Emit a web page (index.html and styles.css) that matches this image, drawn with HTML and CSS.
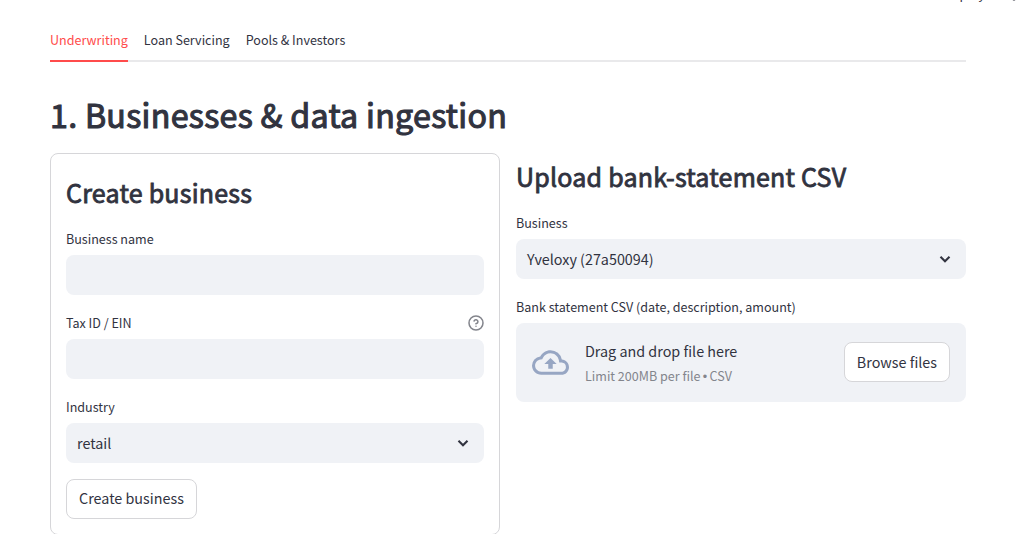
FILE: index.html
```html
<!DOCTYPE html>
<html lang="en">
  <head>
    <meta charset="UTF-8" />
    <meta name="viewport" content="width=device-width, initial-scale=1.0" />
    <title>Underwriting</title>
    <link rel="stylesheet" href="styles.css">
  </head>
  <body>
    <header class="toolbar">
      <span class="deploy">Deploy</span>
      <svg class="menu-dots" viewBox="0 0 4 16" fill="currentColor">
        <circle cx="2" cy="2" r="1.6" />
        <circle cx="2" cy="8" r="1.6" />
        <circle cx="2" cy="14" r="1.6" />
      </svg>
    </header>

    <main class="container">
      <nav class="tabs">
        <a class="tab active">Underwriting</a>
        <a class="tab">Loan Servicing</a>
        <a class="tab">Pools &amp; Investors</a>
      </nav>

      <h1>1. Businesses &amp; data ingestion</h1>

      <div class="columns">
        <form class="card">
          <h2>Create business</h2>

          <div class="field">
            <label for="name">Business name</label>
            <input id="name" class="control" type="text" />
          </div>

          <div class="field">
            <div class="label-row">
              <label for="tax">Tax ID / EIN</label>
              <svg class="help" viewBox="0 0 24 24" fill="none" stroke="currentColor" stroke-width="2.3" stroke-linecap="round" stroke-linejoin="round">
                <circle cx="12" cy="12" r="10.5" />
                <path d="M9.09 9a3 3 0 0 1 5.83 1c0 2-3 3-3 3" />
                <path d="M12 17h.01" />
              </svg>
            </div>
            <input id="tax" class="control" type="text" />
          </div>

          <div class="field">
            <label>Industry</label>
            <div class="control select">
              <span>retail</span>
              <svg class="chevron" viewBox="0 0 24 24" fill="none" stroke="currentColor" stroke-width="2.5">
                <path d="M6.6 9.2 12 14.6l5.4-5.4" />
              </svg>
            </div>
          </div>

          <button type="button" class="btn">Create business</button>
        </form>

        <section class="upload">
          <h2>Upload bank-statement CSV</h2>

          <div class="field">
            <label>Business</label>
            <div class="control select">
              <span>Yveloxy (27a50094)</span>
              <svg class="chevron" viewBox="0 0 24 24" fill="none" stroke="currentColor" stroke-width="2.5">
                <path d="M6.6 9.2 12 14.6l5.4-5.4" />
              </svg>
            </div>
          </div>

          <div class="field">
            <label>Bank statement CSV (date, description, amount)</label>
            <div class="dropzone">
              <svg class="cloud" viewBox="0 0 24 24" fill="currentColor">
                <path d="M19.35 10.04A7.49 7.49 0 0 0 12 4C9.11 4 6.6 5.64 5.35 8.04A5.994 5.994 0 0 0 0 14c0 3.31 2.69 6 6 6h13c2.76 0 5-2.24 5-5 0-2.64-2.05-4.78-4.65-4.96zM19 18H6c-2.21 0-4-1.79-4-4 0-2.05 1.53-3.76 3.56-3.97l1.07-.11.5-.95A5.469 5.469 0 0 1 12 6c2.62 0 4.88 1.86 5.39 4.43l.3 1.5 1.53.11A2.98 2.98 0 0 1 22 15c0 1.65-1.35 3-3 3zM8 13h2.55v3h2.9v-3H16l-4-4z" />
              </svg>
              <div class="drop-text">
                <span class="drop-title">Drag and drop file here</span>
                <small>Limit 200MB per file <span class="dot">•</span> CSV</small>
              </div>
              <button type="button" class="btn browse">Browse files</button>
            </div>
          </div>
        </section>
      </div>
    </main>
  </body>
</html>
```

FILE: styles.css
```css
:root {
  --primary-color: #ff4b4b;
  --text-color: #31333f;
  --muted-color: #83858c;
  --field-color: #f0f2f6;
  --border-color: #d6d6d9;
  --radius: 8px;
}

* {
  box-sizing: border-box;
}

body {
  margin: 0;
  height: 534px;
  overflow: hidden;
  position: relative;
  background-color: white;
  color: var(--text-color);
  font-family: "Noto Sans CJK SC", "Noto Sans", sans-serif;
  font-size: 14.35px;
  line-height: 24px;
}

/* scrolled almost out of view */
.toolbar {
  position: absolute;
  top: -18px;
  right: 17px;
  display: flex;
  align-items: center;
  gap: 27px;
}

.deploy {
  font-size: 12.6px;
}

.menu-dots {
  width: 4px;
  height: 16px;
  margin-top: -2px;
}

.container {
  width: 916px;
  margin-left: 50px;
  padding-top: 20px;
}

.tabs {
  display: flex;
  gap: 16px;
  height: 42px;
  box-shadow: inset 0 -2px #e9e9eb;
}

.tab {
  height: 42px;
  line-height: 40px;
  font-size: 12.56px;
}

.tab.active {
  color: var(--primary-color);
  border-bottom: 2px solid var(--primary-color);
}

/* regular face thickened to a semibold */
h1,
h2 {
  margin: 0;
  font-weight: 400;
  white-space: nowrap;
}

h1 {
  margin: 31px 0 17px;
  font-size: 32.2px;
  line-height: 43px;
  letter-spacing: 0.3px;
  -webkit-text-stroke: 1.1px;
}

h2 {
  font-size: 25px;
  line-height: 34px;
  padding: 6px 0 16px;
  height: 61px;
  letter-spacing: 0.23px;
  -webkit-text-stroke: 0.85px;
}

.columns {
  display: grid;
  grid-template-columns: 1fr 1fr;
  gap: 16px;
  align-items: start;
}

.card {
  padding: 15px;
  border: 1px solid var(--border-color);
  border-radius: var(--radius);
}

.upload {
  min-width: 0;
}

.field {
  margin-bottom: 16px;
}

label {
  display: block;
  height: 28px;
  line-height: 24px;
  margin-top: -3px;
  font-size: 12.55px;
}

.field + .field {
  margin-top: 19px;
}

.label-row {
  display: flex;
  justify-content: space-between;
}

.help {
  width: 16px;
  height: 16px;
  margin-top: 1px;
  overflow: visible;
  color: var(--muted-color);
}

.control {
  display: block;
  width: 100%;
  height: 40px;
  padding: 0 11px;
  border: 0;
  border-radius: var(--radius);
  background-color: var(--field-color);
}

.select {
  display: flex;
  align-items: center;
  justify-content: space-between;
}

.chevron {
  width: 20px;
  height: 20px;
}

.btn {
  height: 40px;
  padding: 0 12px 2px;
  border: 1px solid var(--border-color);
  border-radius: var(--radius);
  background-color: white;
  color: inherit;
  font: inherit;
  white-space: nowrap;
}

.card .btn {
  display: block;
}

.browse {
  padding-bottom: 0;
}

.dropzone {
  display: flex;
  align-items: center;
  height: 79px;
  padding: 0 16px 1px;
  border-radius: var(--radius);
  background-color: var(--field-color);
}

.cloud {
  width: 37px;
  height: 37px;
  margin: 1px 16px 0 0;
  color: #97a6c3;
}

.drop-text {
  display: flex;
  flex-direction: column;
  margin: 3px auto 0 0;
}

small {
  padding-top: 1px;
  margin-bottom: -1px;
  font-size: 12.55px;
  line-height: 24px;
  color: var(--muted-color);
}

.dot {
  margin: 0 -0.5px;
  font-family: "Liberation Sans", sans-serif;
}
```
